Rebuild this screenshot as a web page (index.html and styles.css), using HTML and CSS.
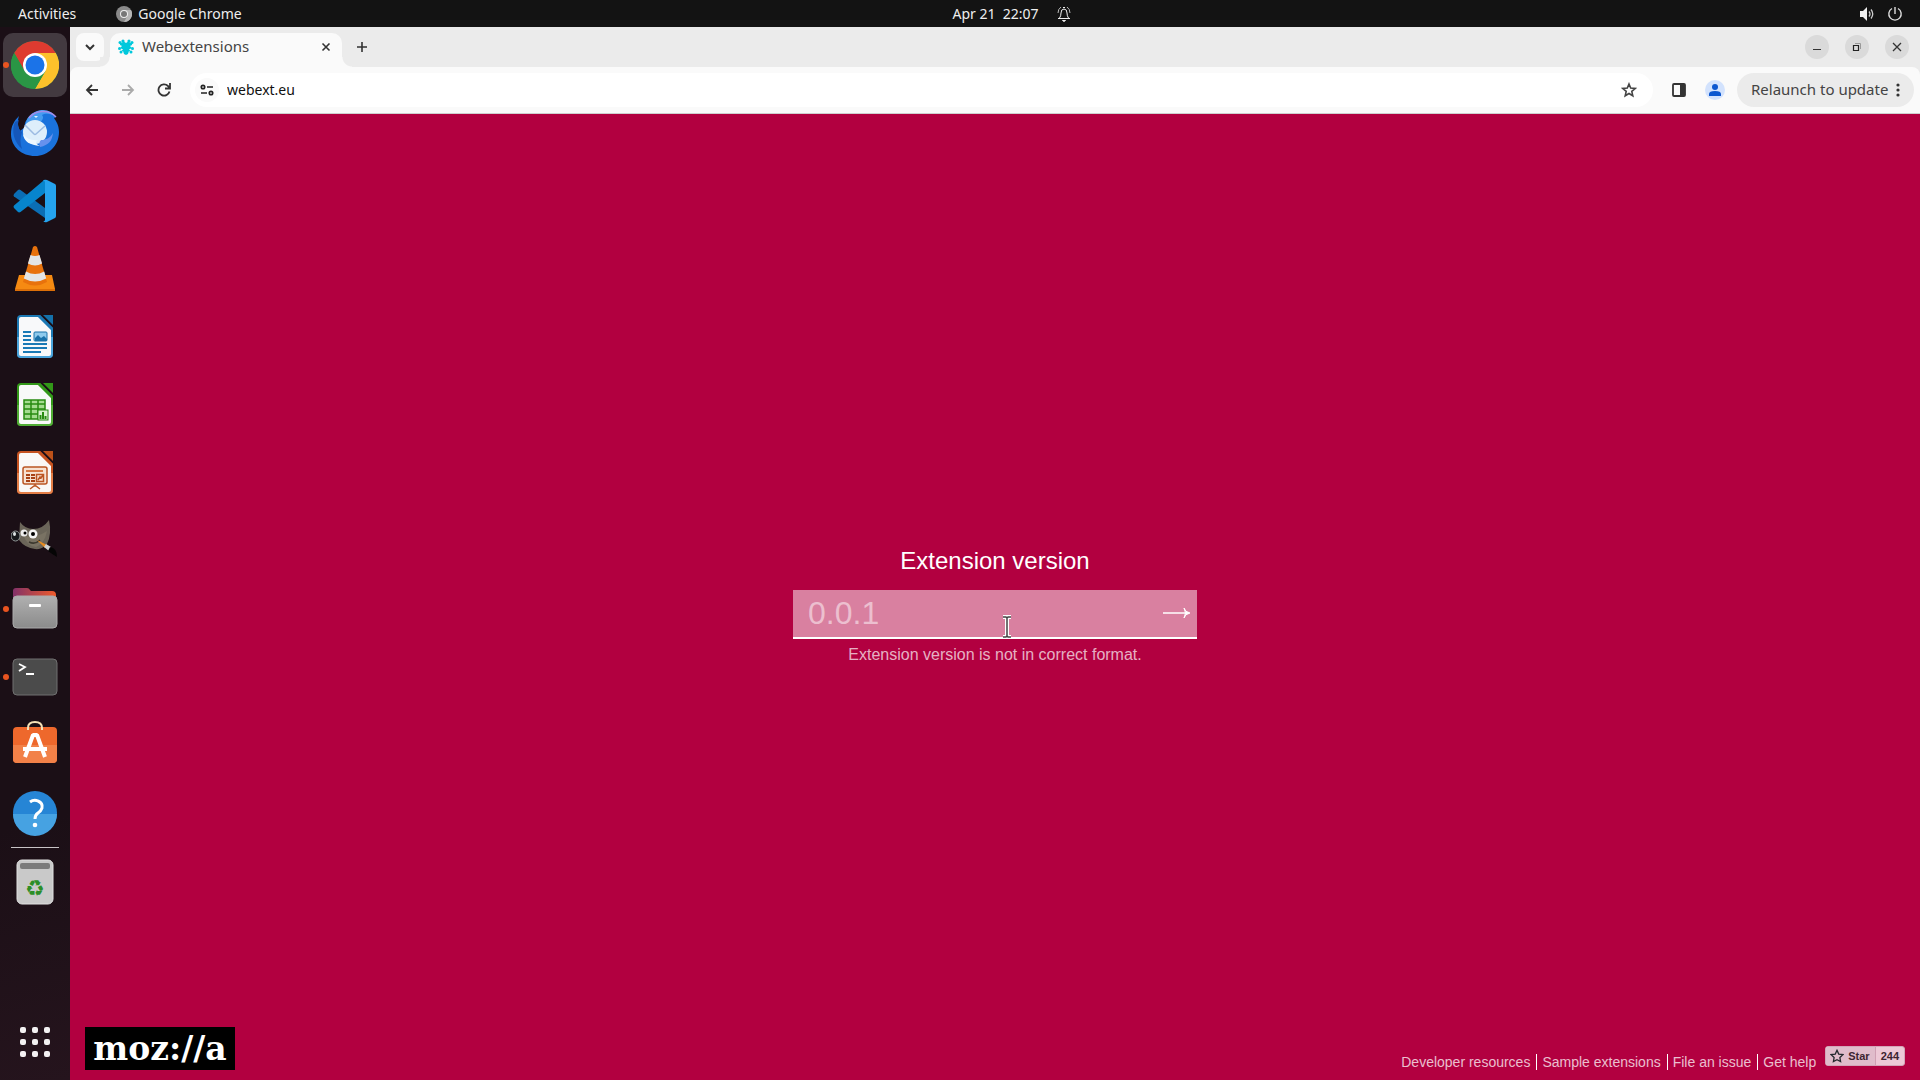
FILE: index.html
```html
<!DOCTYPE html>
<html lang="en">
<head>
	<meta charset="UTF-8">
	<title>Webextensions</title>
	<link rel="stylesheet" href="styles.css">
</head>
<body>
	<header class="topbar">
		<div class="topbar-left">
			<button class="top-btn">Activities</button>
			<button class="top-btn app-menu">
				<svg width="16" height="16" viewBox="0 0 16 16"><circle cx="8" cy="8" r="8" fill="#8a8a8a"/><path d="M8 4h7a8 8 0 0 1-7 12l3.500-6z" fill="#b5b5b5"/><circle cx="8" cy="8" r="4" fill="#eee"/><circle cx="8" cy="8" r="3" fill="#777"/></svg>
				Google Chrome
			</button>
		</div>
		<button class="top-btn clock">
			<span>Apr 21&nbsp; 22:07</span>
			<svg width="14" height="18" viewBox="0 0 14 18" fill="none" stroke="#eee"><path d="M1 13.500h12M2.500 13q1.500-2 1.500-5 0-4 3-4t3 4q0 3 1.500 5"/><path d="M1 8q0-4 3-6M13 8q0-4-3-6" stroke="#bbb"/><path d="M6 3l1-1 1 1" /><path d="M5.500 15.500h3l-1.500 1z" fill="#eee"/></svg>
		</button>
		<button class="top-btn tray" aria-label="System menu">
			<svg width="16" height="16" viewBox="0 0 16 16"><path d="M1 5h3l4-4v14l-4-4H1z" fill="#eee"/><path d="M10 5.500q2 2.500 0 5M12 3.500q3.500 4.500 0 9" fill="none" stroke="#ccc" stroke-width="1.300"/></svg>
			<svg width="16" height="16" viewBox="0 0 16 16" fill="none" stroke="#ddd" stroke-width="1.400"><path d="M5 2.500a6.200 6.200 0 1 0 6 0M8 1v7"/></svg>
		</button>
	</header>

	<div class="desktop">
		<nav class="dock">
			<button class="dock-item active running" aria-label="Google Chrome">
				<svg width="48" height="48" viewBox="0 0 48 48"><circle cx="24" cy="24" r="24" fill="#2a9645"/><path d="M3.200 12A24 24 0 0 1 44.800 12H24L13.600 30z" fill="#de3b30"/><path d="M44.800 12A24 24 0 0 1 24 48L34.400 30 24 12z" fill="#fdc12b"/><path d="M3.200 12 13.600 30 24 36 34.400 30 24 48A24 24 0 0 1 3.200 12" fill="#2a9645"/><circle cx="24" cy="24" r="12" fill="#fff"/><circle cx="24" cy="24" r="9.500" fill="#1b73e8"/></svg>
			</button>
			<button class="dock-item" aria-label="Thunderbird">
				<svg width="48" height="48" viewBox="0 0 48 48"><path d="M8 7C3 12 0 17 0 25c0 13 11 22 24 22s24-10 24-24c0-7-3-11-5-14l2-1C39 0 25 0 19 7c-4 4-6 7-5 11l-5 4c-2-5-3-9-1-15z" fill="#1a72dc"/><path d="M15 17C14 8 23 1 32 1c6 0 10 3 13 7-5-4-11-4-14-2 3 3-1 8-5 8-5 0-8 1-11 3z" fill="#469cf0"/><path d="M18 9C24 1 38 0 45 8" fill="none" stroke="#a58be8" stroke-width="1.500"/><path d="M4 13c-4 9-1 20 7 27-2-6-2-11 0-17-4-3-5-7-3-12z" fill="#1557ba"/><circle cx="24" cy="23" r="12" fill="#ddeefb"/><path d="M14 16l9 9q1 1 2 0l9-8" fill="none" stroke="#9cbbe2" stroke-width="1.500"/><path d="M12 25c1 8 7 11 17 12-6-3-4-4-2-6-6 1-11-1-15-6z" fill="#eef8ff"/><path d="M29 38c9-2 12-6 13-14-3 5-7 7-12 7-2 2-2 4-1 7" fill="#6791ed"/><path d="M23 7h4l-2 2z" fill="#dff1ff"/></svg>
			</button>
			<button class="dock-item" aria-label="Visual Studio Code">
				<svg width="48" height="48" viewBox="0 0 48 48"><path d="M3 17l4-4q1-.8 2.500 0L34 31v10L3 19.500q-1-1 0-2.500z" fill="#0b6eb5"/><path d="M3 31l4 4q1 .8 2.500 0L34 16V3Q33 2 32 4L3 28.500q-1 1 0 2.500z" fill="#0785cd"/><path d="M32 4q2-2 4-1l8 4q1 .5 1 2v30q0 1.500-1 2l-8 4q-2 1-4-1 2 .5 2-1V5q0-1.500-2-1z" fill="#25a3ee"/></svg>
			</button>
			<button class="dock-item" aria-label="VLC media player">
				<svg width="48" height="48" viewBox="0 0 48 48"><path d="M8 30h33l3 14q0 2-2 2H6q-2 0-2-2z" fill="#f68a12"/><path d="M4 44h40v2H4z" fill="#dc6f08"/><path d="M22 2q2-2 4 0l10 35q-12 7-24 0z" fill="#e8720c"/><path d="M19.500 10q4.500 2 9 0l2.600 8.500q-7 4-14.200 0zM15 26.500q9 5 18.200 0l2 7q-11 6-22.400 0z" fill="#e3e5e6"/></svg>
			</button>
			<button class="dock-item" aria-label="LibreOffice Writer">
				<svg width="48" height="48" viewBox="0 0 48 48"><path d="M10 2h19l13 13v26q0 4-4 4H10q-4 0-4-4V6q0-4 4-4z" fill="#1c79b4"/><path d="M6 24h36v17q0 4-4 4H10q-4 0-4-4z" fill="#4ba5dc"/><path d="M10 4h18l12 12v25q0 2-2 2H10q-2 0-2-2V6q0-2 2-2z" fill="#f8f9fa"/><path d="M28 3l13 13" stroke="#1c79b4" stroke-width="3"/><path d="M32 2h10v10z" fill="#1471aa"/><path d="M12 19h8M12 23h8M12 27h8M12 31h24M12 35h24M12 39h18" stroke="#1a7ab6" stroke-width="2"/><rect x="23" y="19" width="13" height="9" rx="1" fill="#8fcbed" stroke="#1a72aa"/><path d="M24 28v-3l3-3 3 3 3-2 3 3v2z" fill="#1a72aa"/></svg>
			</button>
			<button class="dock-item" aria-label="LibreOffice Calc">
				<svg width="48" height="48" viewBox="0 0 48 48"><path d="M10 2h19l13 13v26q0 4-4 4H10q-4 0-4-4V6q0-4 4-4z" fill="#329818"/><path d="M6 24h36v17q0 4-4 4H10q-4 0-4-4z" fill="#51ad35"/><path d="M10 4h18l12 12v25q0 2-2 2H10q-2 0-2-2V6q0-2 2-2z" fill="#f8f9f8"/><path d="M28 3l13 13" stroke="#329818" stroke-width="3"/><path d="M32 2h10v10z" fill="#329818"/><rect x="13" y="19" width="21" height="19" fill="#a5dc91"/><path d="M13 19h21v19H13zM13 23h21M13 28h21M13 33h21M20 19v19M27 19v19" fill="none" stroke="#278b10" stroke-width="1.500"/><rect x="27" y="29" width="10" height="10" fill="#d7f2cc" stroke="#278b10"/><path d="M29.500 38v-4M32 38v-7M34.500 38v-3" stroke="#278b10" stroke-width="2"/></svg>
			</button>
			<button class="dock-item" aria-label="LibreOffice Impress">
				<svg width="48" height="48" viewBox="0 0 48 48"><path d="M10 2h19l13 13v26q0 4-4 4H10q-4 0-4-4V6q0-4 4-4z" fill="#c65320"/><path d="M6 24h36v17q0 4-4 4H10q-4 0-4-4z" fill="#e37e47"/><path d="M10 4h18l12 12v25q0 2-2 2H10q-2 0-2-2V6q0-2 2-2z" fill="#faf8f6"/><path d="M28 3l13 13" stroke="#c65320" stroke-width="3"/><path d="M32 2h10v10z" fill="#bd5119"/><rect x="12" y="18" width="24" height="17" rx="2" fill="#f7e2d2" stroke="#bb5523" stroke-width="1.500"/><path d="M15 22h17" stroke="#d67843" stroke-width="2"/><path d="M15 26h4M20 26h4M15 29h4M20 29h4M15 32h4M20 32h4" stroke="#a74115" stroke-width="2"/><path d="M25.500 25.500h7v7h-7zM27 31l2-3 1 1 2-3M24 35v2M19 40l4-3h2l4 3" fill="none" stroke="#bb5523" stroke-width="1.500"/></svg>
			</button>
			<button class="dock-item" aria-label="GIMP">
				<svg width="48" height="48" viewBox="0 0 48 48"><path d="M9 5q5 7 13 7 10 0 16-9 3 14-2 24-5 6-12 5-10-1-16-9z" fill="#6b6559"/><path d="M12 18q10 5 24-4-2 12-11 16-8 0-13-12z" fill="#797263"/><ellipse cx="4.500" cy="19" rx="4.500" ry="5" fill="#17191c" stroke="#929898"/><ellipse cx="3.500" cy="17" rx="1.500" ry="2" fill="#dfe5e5"/><circle cx="13" cy="16" r="3.500" fill="#eee"/><circle cx="22" cy="17" r="4.500" fill="#f5f5f5"/><circle cx="14" cy="16" r="1.500"/><circle cx="22" cy="17" r="2"/><path d="M18 25q6 3 11-2" fill="none" stroke="#3c392f" stroke-width="1.500"/><path d="M26 23l10 5-2 3z" fill="#e88b20"/><path d="M35 27l5 3-2 4-5-4z" fill="#d0d3d4"/><path d="M39 30q7 1 7 10-5-3-9-6z" fill="#050505"/></svg>
			</button>
			<button class="dock-item running" aria-label="Files">
				<svg width="48" height="48" viewBox="0 0 48 48"><defs><linearGradient id="folder"><stop stop-color="#823168"/><stop offset="1" stop-color="#ef5b2b"/></linearGradient><linearGradient id="grey" x2="0" y2="1"><stop stop-color="#b0b0b0"/><stop offset="1" stop-color="#8b8b8b"/></linearGradient></defs><path d="M2 20V6q0-3 3-3h11q2 0 3 2l1 1h21q4 0 4 4v10z" fill="url(#folder)"/><rect x="2" y="11" width="44" height="32" rx="4" fill="url(#grey)" stroke="#ababab"/><rect x="18" y="19" width="12" height="3" rx="1" fill="#fff"/></svg>
			</button>
			<button class="dock-item running" aria-label="Terminal">
				<svg width="48" height="48" viewBox="0 0 48 48"><rect x="2" y="6" width="44" height="36" rx="4" fill="#4b4b4b" stroke="#707070"/><path d="M8 11l6 3-6 4M15 21h8" fill="none" stroke="#fff" stroke-width="1.800"/></svg>
			</button>
			<button class="dock-item" aria-label="Ubuntu Software">
				<svg width="48" height="48" viewBox="0 0 48 48"><rect x="2" y="6" width="44" height="36" rx="4" fill="#ee682c"/><path d="M2 24h44v14q0 4-4 4H6q-4 0-4-4z" fill="#f28148"/><path d="M17 9V7q0-6 7-6t7 6v2" fill="none" stroke="#f5e2b7" stroke-width="2"/><path d="M14 36l8-22h4l8 22M12 28h24" fill="none" stroke="#fff" stroke-width="4" stroke-linejoin="bevel"/></svg>
			</button>
			<button class="dock-item" aria-label="Help">
				<svg width="48" height="48" viewBox="0 0 48 48"><circle cx="24" cy="24" r="22" fill="#2685d5"/><path d="M2 25h44a22 22 0 0 1-44 0z" fill="#46a2e2"/><path d="M19 13q4-3 8-1 5 2 4 7-1 3-4 5-3 2-3 6" fill="none" stroke="#fff" stroke-width="3"/><circle cx="24" cy="36" r="2.300" fill="#fff"/></svg>
			</button>
			<hr class="dock-line">
			<button class="dock-item" aria-label="Trash">
				<svg width="48" height="48" viewBox="0 0 48 48"><rect x="6" y="2" width="36" height="44" rx="5" fill="#c9c9c9" stroke="#e1e1e1"/><rect x="9" y="5" width="30" height="6" rx="2" fill="#7b7b7b"/><text class="recycle" x="24" y="38" text-anchor="middle">♻</text></svg>
			</button>
			<button class="dock-item apps" aria-label="Show Applications">
				<svg width="30" height="30" viewBox="0 0 30 30" fill="#f3f1f2"><rect width="6" height="6" rx="2"/><rect x="12" width="6" height="6" rx="2"/><rect x="24" width="6" height="6" rx="2"/><rect y="12" width="6" height="6" rx="2"/><rect x="12" y="12" width="6" height="6" rx="2"/><rect x="24" y="12" width="6" height="6" rx="2"/><rect y="24" width="6" height="6" rx="2"/><rect x="12" y="24" width="6" height="6" rx="2"/><rect x="24" y="24" width="6" height="6" rx="2"/></svg>
			</button>
		</nav>

		<div class="browser">
			<div class="tabstrip">
				<button class="tab-search" aria-label="Search tabs"><svg width="10" height="10" viewBox="0 0 10 10" fill="none" stroke="#333" stroke-width="2"><path d="M1 3l4 4 4-4"/></svg></button>
				<div class="tab">
					<svg width="16" height="16" viewBox="0 0 16 16" fill="#00c8dc"><circle cx="5" cy="2" r="1.600"/><circle cx="11" cy="2" r="1.600"/><circle cx="2" cy="3.500" r="1.500"/><circle cx="14" cy="3.500" r="1.500"/><circle cx="1.500" cy="9.500" r="1.500"/><circle cx="14.500" cy="9.500" r="1.500"/><circle cx="3" cy="13" r="1.500"/><circle cx="13" cy="13" r="1.500"/><path d="M5 2l3 2 3-2 1 2 2-1v3l-2 1 2 2-2 1-1 0 2 3-2-1-1 3-2 1-2-1-1-3-2 1 2-3H4L2 9l2-2-2-1V3l2 1z"/></svg>
					<span class="tab-title">Webextensions</span>
					<button class="tab-close" aria-label="Close tab"><svg width="10" height="10" viewBox="0 0 10 10" stroke="#333" stroke-width="1.600"><path d="M1.500 1.500l7 7M8.500 1.500l-7 7"/></svg></button>
				</div>
				<button class="new-tab" aria-label="New tab"><svg width="12" height="12" viewBox="0 0 12 12" stroke="#333" stroke-width="1.600"><path d="M6 1v10M1 6h10"/></svg></button>
				<div class="win-btns">
					<button aria-label="Minimize"><svg width="10" height="10" viewBox="0 0 10 10"><path d="M1 7.500h8" stroke="#333"/></svg></button>
					<button aria-label="Restore"><svg width="10" height="10" viewBox="0 0 10 10" fill="none"><path d="M3 1.500h5.500V7" stroke="#999"/><path d="M1.500 3.500h5v5h-5z" stroke="#222" stroke-width="1.200"/></svg></button>
					<button aria-label="Close"><svg width="10" height="10" viewBox="0 0 10 10" stroke="#333" stroke-width="1.300"><path d="M1 1l8 8M9 1L1 9"/></svg></button>
				</div>
			</div>
			<div class="toolbar">
				<button class="tool-btn" aria-label="Back"><svg width="14" height="14" viewBox="0 0 14 14" fill="none" stroke="#333" stroke-width="1.800"><path d="M13 7H2M7 2L2 7l5 5"/></svg></button>
				<button class="tool-btn" aria-label="Forward"><svg width="14" height="14" viewBox="0 0 14 14" fill="none" stroke="#aaa" stroke-width="1.800"><path d="M1 7h11M7 2l5 5-5 5"/></svg></button>
				<button class="tool-btn" aria-label="Reload"><svg width="14" height="14" viewBox="0 0 14 14" fill="none" stroke="#333" stroke-width="1.800"><path d="M12.500 8.500A5.600 5.600 0 1 1 11 3l1.500 2M13 0v5.500H8"/></svg></button>
				<div class="address">
					<button class="site-info" aria-label="View site information"><svg width="14" height="12" viewBox="0 0 14 12" fill="none" stroke="#222" stroke-width="1.700"><path d="M7 3h6M1 9h6"/><circle cx="3" cy="3" r="1.700"/><circle cx="11" cy="9" r="1.700"/></svg></button>
					<input class="url" type="text" value="webext.eu" aria-label="Address and search bar">
					<button class="tool-btn" aria-label="Bookmark this tab"><svg width="16" height="16" viewBox="0 0 16 16" fill="none" stroke="#444" stroke-width="1.600"><path d="M8 2l1.700 4.100 4.500.4-3.400 2.900 1 4.400L8 11.500l-3.800 2.300 1-4.400-3.400-2.900 4.500-.4z"/></svg></button>
				</div>
				<button class="tool-btn" aria-label="Side panel"><svg width="16" height="16" viewBox="0 0 16 16"><rect x="2" y="2" width="12" height="12" rx="1" fill="none" stroke="#333" stroke-width="1.800"/><path d="M9 2h5v12H9z" fill="#333"/></svg></button>
				<button class="tool-btn" aria-label="Profile"><svg width="20" height="20" viewBox="0 0 20 20"><circle cx="10" cy="10" r="10" fill="#d2e2fd"/><circle cx="10" cy="7" r="3" fill="#0b57d0"/><path d="M4 16v-2q0-3 6-3t6 3v2z" fill="#0b57d0"/></svg></button>
				<button class="relaunch"><span>Relaunch to update</span><svg width="4" height="14" viewBox="0 0 4 14" fill="#333"><circle cx="2" cy="2" r="1.600"/><circle cx="2" cy="7" r="1.600"/><circle cx="2" cy="12" r="1.600"/></svg></button>
			</div>

			<main class="page">
				<form class="version-form">
					<label class="form-label" for="version">Extension version</label>
					<div class="field">
						<input class="version" id="version" type="text" placeholder="0.0.1" aria-describedby="version-error">
						<button class="next" type="button" aria-label="Next"><svg width="28" height="12" viewBox="0 0 28 12" fill="none" stroke="#fff" stroke-width="1.500"><path d="M0 6h26"/><path d="M21 1q1 4 6 5-5 1-6 5 3-5 0-10" fill="#fff" stroke-width="1"/></svg></button>
						<svg class="cursor" width="10" height="24" viewBox="0 0 10 24" fill="none"><path d="M1 2h3l1 1 1-1h3M5 3v18M1 22h3l1-1 1 1h3" stroke="#fff" stroke-width="4"/><path d="M1 2h3l1 1 1-1h3M5 3v18M1 22h3l1-1 1 1h3" stroke="#444" stroke-width="1.500"/></svg>
					</div>
					<p class="error" id="version-error">Extension version is not in correct format.</p>
				</form>
				<footer class="footer">
					<a class="moz" href="#">moz://a</a>
					<div class="footer-right">
						<ul class="links">
							<li><a href="#">Developer resources</a></li>
							<li><a href="#">Sample extensions</a></li>
							<li><a href="#">File an issue</a></li>
							<li><a href="#">Get help</a></li>
						</ul>
						<div class="github">
							<a class="star" href="#"><svg width="14" height="14" viewBox="0 0 16 16" fill="none" stroke="#24292e" stroke-width="1.500"><path d="M8 1.500l2 4.300 4.700.6-3.400 3.300.8 4.700L8 12.200l-4.100 2.200.8-4.700L1.300 6.400l4.700-.6z"/></svg>Star</a>
							<a class="count" href="#">244</a>
						</div>
					</div>
				</footer>
			</main>
		</div>
	</div>
</body>
</html>
```
FILE: styles.css
```css
*{
	box-sizing: border-box;
	margin: 0;
	padding: 0;
}
body{
	display: flex;
	flex-direction: column;
	min-height: 100vh;
	background-color: #131313;
	font: 15px/20px "Noto Sans", sans-serif;
}
button{
	border: none;
	background: none;
	color: inherit;
	font: inherit;
}
a{
	color: inherit;
	text-decoration: none;
}
svg{
	display: block;
	flex: none;
}

/* top bar */
.topbar{
	display: grid;
	grid-template-columns: 1fr auto 1fr;
	align-items: center;
	height: 27px;
	padding: 0 17px 0 18px;
	color: #eee;
	font-size: 14px;
}
.topbar-left{
	display: flex;
	gap: 40px;
}
.top-btn{
	display: flex;
	align-items: center;
	gap: 6px;
}
.clock{
	gap: 18px;
	padding-left: 102px;
}
.tray{
	justify-self: end;
	gap: 12px;
}

.desktop{
	display: flex;
	flex: 1;
}

/* dock */
.dock{
	display: flex;
	flex-direction: column;
	align-items: center;
	gap: 4px;
	width: 70px;
	padding: 6px 0;
	background: linear-gradient(165deg, #1b0f16 75%, #25141d);
}
.dock-item{
	display: flex;
	align-items: center;
	justify-content: center;
	position: relative;
	width: 64px;
	height: 64px;
	border-radius: 10px;
}
.active{
	background-color: #433a40;
}
.running::before{
	content: "";
	position: absolute;
	left: 0;
	top: 29px;
	width: 6px;
	height: 6px;
	border-radius: 50%;
	background-color: #e95420;
}
.dock-line{
	width: 48px;
	height: 1px;
	margin: -2px 0;
	border: none;
	background-color: #c8c4c6;
}
.recycle{
	fill: #2c8e27;
	font: 22px "DejaVu Sans", sans-serif;
}
.apps{
	margin-top: auto;
}

/* browser */
.browser{
	display: flex;
	flex-direction: column;
	flex: 1;
	background-color: #ebebeb;
	color: #444;
}
.tabstrip{
	display: flex;
	height: 40px;
	padding: 6px 11px 0 6px;
}
.tab-search{
	display: flex;
	align-items: center;
	justify-content: center;
	width: 28px;
	height: 28px;
	margin-right: 6px;
	border-radius: 8px;
	background-color: #fafafa;
}
.tab{
	display: flex;
	align-items: center;
	gap: 8px;
	position: relative;
	width: 232px;
	height: 34px;
	padding: 0 10px 6px 8px;
	border-radius: 10px 10px 0 0;
	background-color: #fafafa;
}
/* curved feet of the active tab */
.tab::before, .tab::after{
	content: "";
	position: absolute;
	bottom: 0;
	width: 10px;
	height: 10px;
}
.tab::before{
	left: -10px;
	background: radial-gradient(circle at 0 0, #ebebeb 9px, #fafafa 10px);
}
.tab::after{
	right: -10px;
	background: radial-gradient(circle at 100% 0, #ebebeb 9px, #fafafa 10px);
}
.tab-title{
	flex: 1;
	padding-bottom: 2px;
}
.tab-close, .new-tab{
	display: flex;
	align-items: center;
	justify-content: center;
	width: 12px;
	height: 28px;
}
.new-tab{
	margin-left: 14px;
}
.win-btns{
	display: flex;
	gap: 16px;
	margin-left: auto;
	padding-top: 2px;
}
.win-btns button{
	display: flex;
	align-items: center;
	justify-content: center;
	width: 24px;
	height: 24px;
	border-radius: 50%;
	background-color: #dadada;
}
.toolbar{
	display: flex;
	align-items: center;
	height: 47px;
	padding: 0 6px 0 4px;
	border-bottom: 1px solid #cfcfcf;
	border-radius: 8px 8px 0 0;
	background-color: #fafafa;
}
.tool-btn{
	display: flex;
	align-items: center;
	justify-content: center;
	width: 36px;
	height: 34px;
}
.address{
	display: flex;
	align-items: center;
	flex: 1;
	height: 34px;
	margin: 0 8px;
	padding: 0 6px 0 5px;
	border-radius: 17px;
	background-color: #fff;
}
.site-info{
	display: flex;
	align-items: center;
	justify-content: center;
	width: 24px;
	height: 24px;
	border-radius: 50%;
	background-color: #fafafa;
}
.url{
	flex: 1;
	padding: 0 8px 2px;
	border: none;
	outline: none;
	background: none;
	color: #111;
	font-family: inherit;
	font-size: 14px;
}
.relaunch{
	display: flex;
	align-items: center;
	justify-content: space-between;
	width: 177px;
	height: 34px;
	margin-left: 4px;
	padding: 0 14px;
	border-radius: 17px;
	background-color: #ebebeb;
	white-space: nowrap;
}
.relaunch span{
	padding-bottom: 2px;
}

/* page */
.page{
	display: flex;
	flex-direction: column;
	flex: 1;
	background-color: #b20040;
	color: #fff;
	font-family: "Liberation Sans", Arial, sans-serif;
}
.version-form{
	display: flex;
	flex-direction: column;
	align-items: center;
	margin: auto;
	padding-top: 70px;
}
.form-label{
	margin-bottom: 15px;
	font-size: 24px;
	line-height: 28px;
}
.field{
	display: flex;
	position: relative;
	width: 404px;
	height: 49px;
	border-bottom: 2px solid #fff;
	background-color: rgba(255, 255, 255, .5);
}
.version{
	flex: 1;
	min-width: 0;
	padding: 0 15px;
	border: none;
	outline: none;
	background: none;
	color: #fff;
	font: 32px "Liberation Sans", Arial, sans-serif;
}
.version::placeholder{
	color: rgba(255, 255, 255, .5);
}
.next{
	padding: 0 6px;
}
.cursor{
	position: absolute;
	left: 209px;
	bottom: -2px;
}
.error{
	margin-top: 6px;
	color: rgba(255, 255, 255, .7);
	font-size: 16px;
	line-height: 20px;
}
.footer{
	display: flex;
	align-items: flex-end;
	justify-content: space-between;
	padding: 0 15px 10px;
}
.moz{
	width: 150px;
	height: 43px;
	background-color: #000;
	font: bold 33px/44px "DejaVu Serif", serif;
	text-align: center;
}
.footer-right{
	display: flex;
	align-items: flex-start;
	gap: 9px;
}
.links{
	display: flex;
	padding-top: 8px;
	list-style: none;
	color: rgba(255, 255, 255, .75);
	font-size: 14px;
	line-height: 16px;
}
.links li + li{
	margin-left: 6px;
	padding-left: 5px;
	border-left: 1px solid #fff;
}
.github{
	display: flex;
	border: 1px solid #d3a5b8;
	border-radius: 3px;
	background-color: #edc8d6;
	color: #3d2531;
	font: bold 11px/18px "Liberation Sans", Arial, sans-serif;
}
.star{
	display: flex;
	align-items: center;
	gap: 4px;
	padding: 0 5px 0 4px;
	border-right: 1px solid #cf9fb3;
	background-color: #e0bccb;
}
.count{
	padding: 0 5px;
}
```
